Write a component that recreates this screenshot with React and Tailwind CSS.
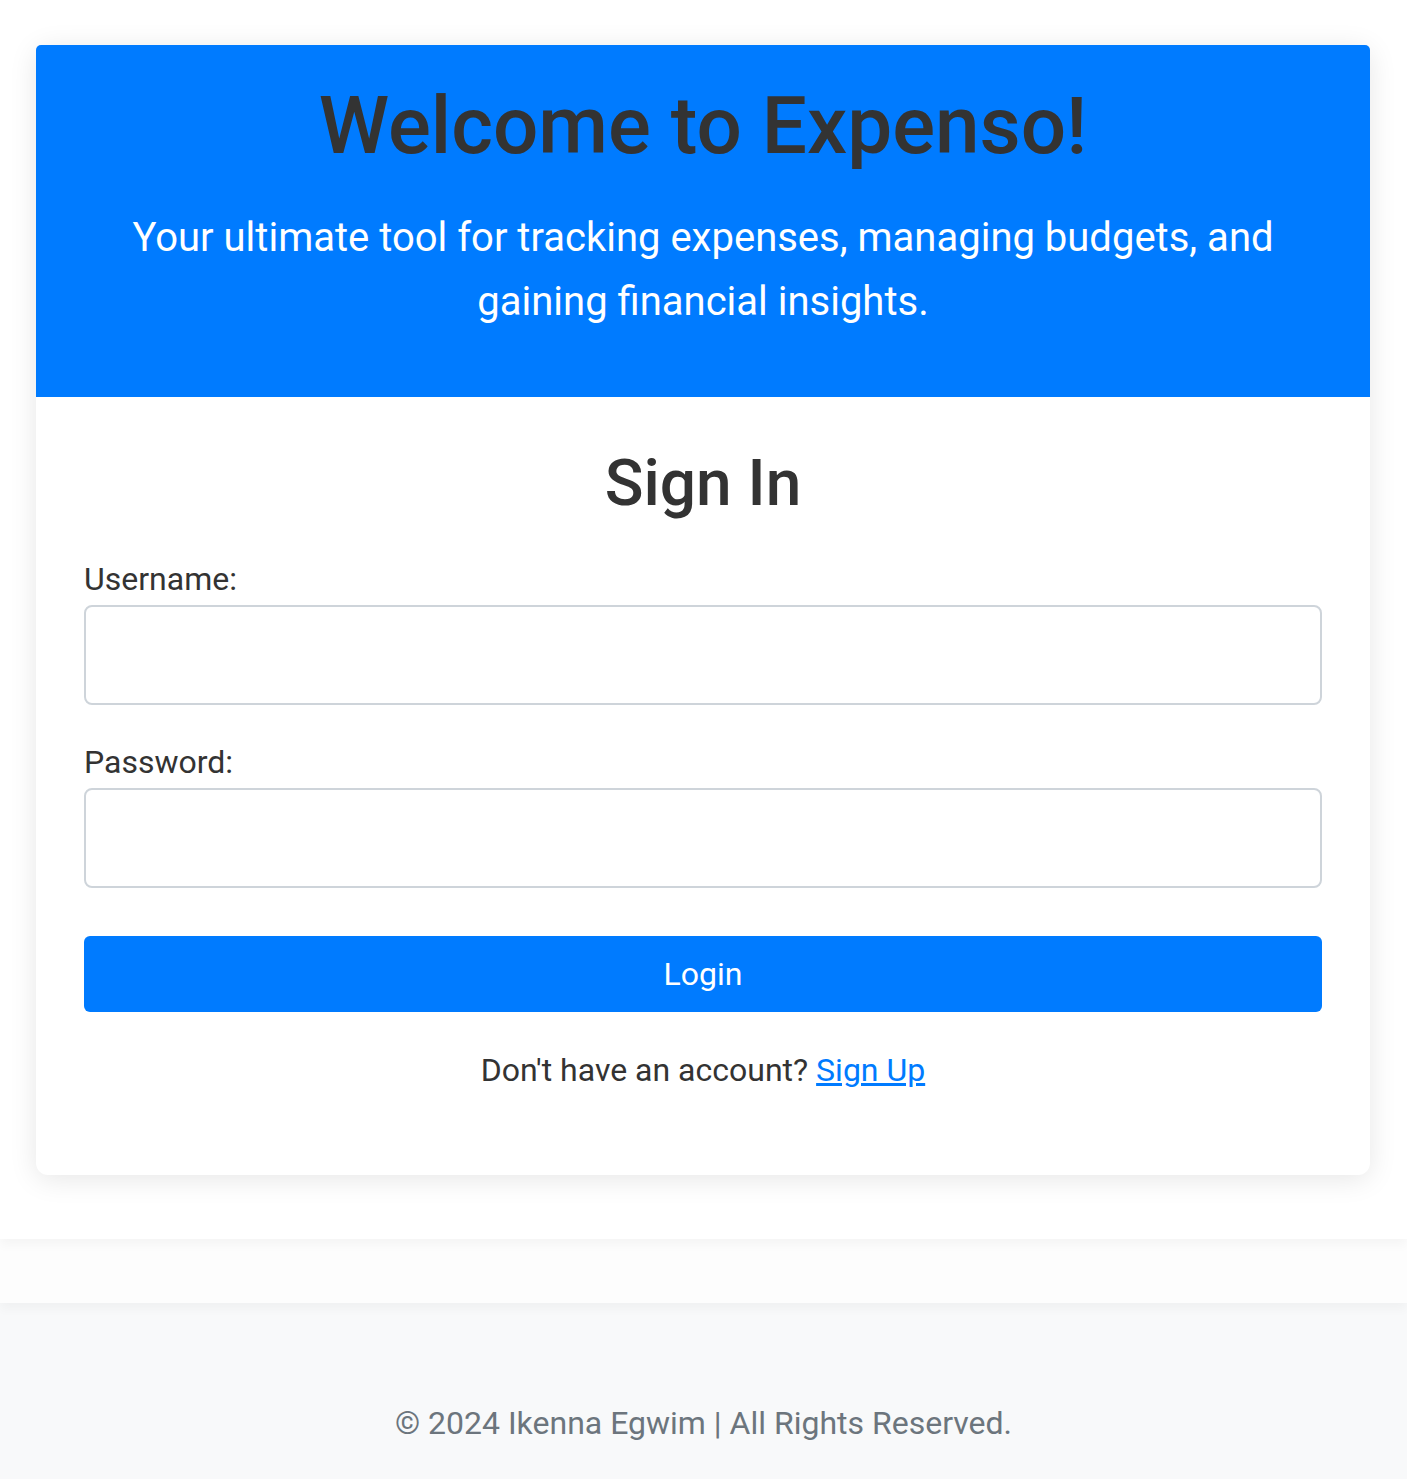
import React, { useState } from 'react';

const Campo = ({ id, etiqueta, tipo, valor, onChange }) => (
  <div>
    <label htmlFor={id} className="block mb-[2px] text-[32px] leading-[48px] text-[#333]">
      {etiqueta}
    </label>
    <input
      id={id}
      type={tipo}
      value={valor}
      onChange={e => onChange(e.target.value)}
      className="block w-full h-[100px] rounded-[8px] border-2 border-[#ced4da] bg-white px-6 text-[32px] text-[#333] outline-none"
    />
  </div>
);

export default function App() {
  const [usuario, setUsuario] = useState('');
  const [clave, setClave] = useState('');

  return (
    <div className="min-h-screen bg-white font-['Roboto','Liberation_Sans',sans-serif]">
      {/* contenido principal */}
      <main className="relative z-20 bg-white pt-[45px] pb-[64px] pl-[36px] pr-[37px] shadow-[0_6px_10px_rgba(0,0,0,0.035)]">
        <div className="rounded-xl bg-white shadow-[0_4px_28px_rgba(0,0,0,0.1)]">
          <div className="rounded-t-[5px] bg-[#007bff] px-12 pt-[33px] pb-[63px] text-center">
            <h1 className="text-[80px] leading-[1.2] font-medium text-[#333]">Welcome to Expenso!</h1>
            <p className="mt-[32px] text-[40px] leading-[64px] text-white">
              Your ultimate tool for tracking expenses, managing budgets, and gaining financial insights.
            </p>
          </div>

          <div className="px-12 pt-[49px] pb-[81px]">
            <h2 className="text-center text-[64px] leading-[1.2] font-medium text-[#333]">Sign In</h2>
            <form className="mt-[32px]" onSubmit={e => e.preventDefault()}>
              <Campo id="username" etiqueta="Username:" tipo="text" valor={usuario} onChange={setUsuario} />
              <div className="mt-[33px]">
                <Campo id="password" etiqueta="Password:" tipo="password" valor={clave} onChange={setClave} />
              </div>
              <button
                type="submit"
                className="mt-[48px] block w-full h-[76px] rounded-[6px] bg-[#007bff] text-[32px] text-white"
              >
                Login
              </button>
            </form>
            <p className="mt-[34px] text-center text-[32px] leading-[48px] text-[#333]">
              Don't have an account? <a href="#" className="text-[#007bff] underline">Sign Up</a>
            </p>
          </div>
        </div>
      </main>

      <div className="relative z-10 h-[64px] bg-[#fdfdfd] shadow-[0_6px_10px_rgba(0,0,0,0.035)]" />

      <footer className="bg-[#f8f9fa] pt-[96px] pb-[32px] text-center">
        <p className="text-[32px] leading-[48px] text-[#6c757d]">© 2024 Ikenna Egwim | All Rights Reserved.</p>
      </footer>
    </div>
  );
}
